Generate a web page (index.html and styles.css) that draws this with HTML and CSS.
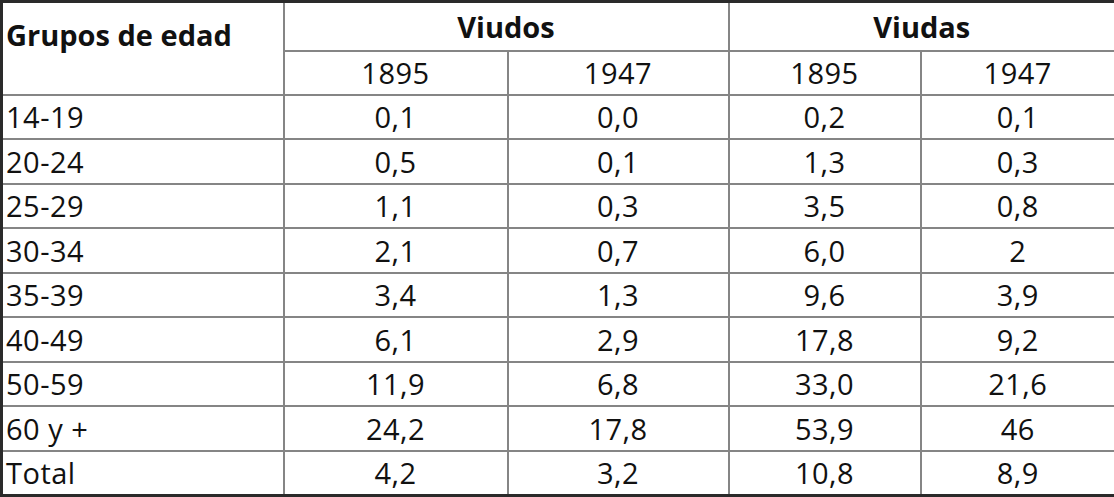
FILE: index.html
```html
<!DOCTYPE html>
<html lang="es">
<head>
    <meta charset="UTF-8">
    <title>Viudos y viudas por grupos de edad</title>
    <link rel="stylesheet" href="styles.css">
</head>
<body>
    <table class="stats">
        <colgroup>
            <col class="col-group">
            <col class="col-a">
            <col class="col-b">
            <col class="col-c">
            <col class="col-d">
        </colgroup>
        <thead>
            <tr class="head-top">
                <th rowspan="2" class="label-head">Grupos de edad</th>
                <th colspan="2">Viudos</th>
                <th colspan="2">Viudas</th>
            </tr>
            <tr class="head-years">
                <td>1895</td>
                <td>1947</td>
                <td>1895</td>
                <td>1947</td>
            </tr>
        </thead>
        <tbody>
            <tr><td class="label">14-19</td><td>0,1</td><td>0,0</td><td>0,2</td><td>0,1</td></tr>
            <tr><td class="label">20-24</td><td>0,5</td><td>0,1</td><td>1,3</td><td>0,3</td></tr>
            <tr><td class="label">25-29</td><td>1,1</td><td>0,3</td><td>3,5</td><td>0,8</td></tr>
            <tr><td class="label">30-34</td><td>2,1</td><td>0,7</td><td>6,0</td><td>2</td></tr>
            <tr><td class="label">35-39</td><td>3,4</td><td>1,3</td><td>9,6</td><td>3,9</td></tr>
            <tr><td class="label">40-49</td><td>6,1</td><td>2,9</td><td>17,8</td><td>9,2</td></tr>
            <tr><td class="label">50-59</td><td>11,9</td><td>6,8</td><td>33,0</td><td>21,6</td></tr>
            <tr><td class="label">60 y +</td><td>24,2</td><td>17,8</td><td>53,9</td><td>46</td></tr>
            <tr><td class="label">Total</td><td>4,2</td><td>3,2</td><td>10,8</td><td>8,9</td></tr>
        </tbody>
    </table>
</body>
</html>
```

FILE: styles.css
```css
body {
    margin: 0;
    background-color: #ffffff;
    color: #111111;
    font-family: "Open Sans", "Liberation Sans", sans-serif;
}
.stats {
    width: 1114px;
    table-layout: fixed;
    border-collapse: collapse;
    border: 3px solid #2a2a2a;
    font-size: 29px;
    line-height: 1;
}
.col-group { width: 282px; }
.col-a { width: 224px; }
.col-b { width: 221px; }
.col-c { width: 192px; }
.col-d { width: 195px; }
.stats th,
.stats td {
    border: 2px solid #858585;
    padding: 0 3px;
    text-align: center;
    vertical-align: middle;
    letter-spacing: 0.5px;
}
.stats th {
    font-weight: 700;
    letter-spacing: 0;
}
.head-top {
    height: 49px;
}
.head-years {
    height: 44px;
}
.stats tbody tr {
    height: 44.5px;
}
.stats .label-head {
    text-align: left;
    vertical-align: top;
    padding-top: 17px;
}
.stats .label {
    text-align: left;
}
```
